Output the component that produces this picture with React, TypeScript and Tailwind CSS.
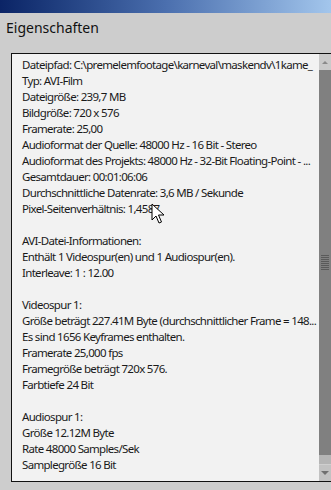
import React from 'react';

const lines: string[] = [
  'Dateipfad: C:\\premelemfootage\\karneval\\maskendv\\1kame_',
  'Typ: AVI-Film',
  'Dateigröße: 239,7 MB',
  'Bildgröße: 720 x 576',
  'Framerate: 25,00',
  'Audioformat der Quelle: 48000 Hz - 16 Bit - Stereo',
  'Audioformat des Projekts: 48000 Hz - 32-Bit Floating-Point - ...',
  'Gesamtdauer: 00:01:06:06',
  'Durchschnittliche Datenrate: 3,6 MB / Sekunde',
  'Pixel-Seitenverhältnis: 1,4587',
  '',
  'AVI-Datei-Informationen:',
  'Enthält 1 Videospur(en) und 1 Audiospur(en).',
  'Interleave: 1 : 12.00',
  '',
  'Videospur 1:',
  'Größe beträgt 227.41M Byte (durchschnittlicher Frame = 148...',
  'Es sind 1656 Keyframes enthalten.',
  'Framerate 25,000 fps',
  'Framegröße beträgt 720x 576.',
  'Farbtiefe 24 Bit',
  '',
  'Audiospur 1:',
  'Größe 12.12M Byte',
  'Rate 48000 Samples/Sek',
  'Samplegröße 16 Bit',
];

function Cursor() {
  return (
    <svg className="absolute left-[151px] top-[203px]" width="14" height="22" viewBox="0 0 14 22">
      <path d="M1 1 L1 17 L5 13 L8 20 L10.5 19 L7.5 12 L13 12 Z" fill="#fff" stroke="#000" strokeWidth="1" strokeLinejoin="miter" />
    </svg>
  );
}

export default function App() {
  return (
    <div className="relative w-[331px] h-[490px] overflow-hidden bg-[#cdcdcd]" style={{ fontFamily: '"Noto Sans", "Open Sans", sans-serif' }}>
      <div className="h-[13px] bg-gradient-to-r from-[#0b2466] via-[#4b6fae] to-[#a3c6ec]" />
      <div className="pl-[6px] pt-[5px] h-[40px] text-[14px] leading-[20px] text-[#111]">Eigenschaften</div>
      <div className="flex ml-[11px] h-[429px]">
        <div className="flex-1 bg-[#f2f2f2] border border-[#111] border-r-0 pt-[3px] pl-[10px] overflow-hidden">
          {lines.map((l, i) => (
            <div key={i} className="h-[16px] leading-[16px] text-[11.5px] tracking-[-0.68px] text-[#1a1a1a] whitespace-nowrap">
              {l || '\u00a0'}
            </div>
          ))}
        </div>
        <div className="w-[12px] flex flex-col border-t border-b border-[#111] bg-[#808080]">
          <div className="h-[16px] bg-[#cacaca] flex items-center justify-center">
            <div className="w-0 h-0 border-l-[3px] border-r-[3px] border-b-[3px] border-l-transparent border-r-transparent border-b-[#8a8a8a]" />
          </div>
          <div className="flex-1 flex flex-col items-center justify-center gap-[1px]">
            {Array.from({ length: 8 }).map((_, i) => (
              <div key={i} className="w-[8px] h-[1px] bg-[#5a5a5a]" />
            ))}
          </div>
          <div className="h-[10px] bg-[#b5b5b5] border-b border-[#cfcfcf]" />
          <div className="h-[16px] bg-[#c2c2c2] flex items-center justify-center">
            <div className="w-0 h-0 border-l-[4px] border-r-[4px] border-t-[4px] border-l-transparent border-r-transparent border-t-[#707070]" />
          </div>
        </div>
      </div>
      <Cursor />
    </div>
  );
}
